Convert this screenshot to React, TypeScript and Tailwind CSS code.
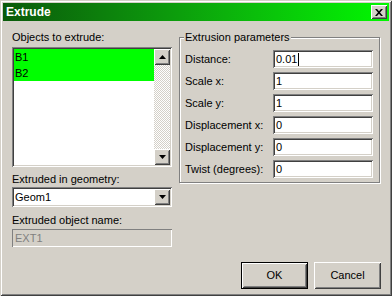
import React from "react";

const sunken =
  "shadow-[inset_1px_1px_#808080,inset_-1px_-1px_#ffffff,inset_2px_2px_#404040,inset_-2px_-2px_#d4d0c8]";
const raised =
  "shadow-[inset_1px_1px_#ffffff,inset_-1px_-1px_#404040,inset_2px_2px_#d4d0c8,inset_-2px_-2px_#808080]";

const Arrow: React.FC<{ up?: boolean }> = ({ up }) => (
  <svg width="7" height="4" viewBox="0 0 7 4">
    {up ? <polygon points="3.5,0 7,4 0,4" fill="#000" /> : <polygon points="0,0 7,0 3.5,4" fill="#000" />}
  </svg>
);

const ScrollButton: React.FC<{ up?: boolean }> = ({ up }) => (
  <div className={`w-[16px] h-[16px] bg-[#d4d0c8] flex items-center justify-center ${raised}`}>
    <Arrow up={up} />
  </div>
);

const params: { label: string; value: string; caret?: boolean }[] = [
  { label: "Distance:", value: "0.01", caret: true },
  { label: "Scale x:", value: "1" },
  { label: "Scale y:", value: "1" },
  { label: "Displacement x:", value: "0" },
  { label: "Displacement y:", value: "0" },
  { label: "Twist (degrees):", value: "0" },
];

export default function App() {
  return (
    <div
      className="w-[392px] h-[296px] bg-[#d4d0c8] p-[3px] flex flex-col text-[11px] leading-[13px] text-black shadow-[inset_1px_1px_#d4d0c8,inset_-1px_-1px_#404040,inset_2px_2px_#ffffff,inset_-2px_-2px_#808080]"
      style={{ fontFamily: '"Liberation Sans", Arial, sans-serif' }}
    >
      {/* title bar */}
      <div className="h-[18px] flex items-center justify-between pl-[3px] pr-[2px] bg-linear-to-r from-[#0a5a0a] to-[#00f800]">
        <span className="text-white font-bold text-[12px] leading-[14px]">Extrude</span>
        <div className={`w-[16px] h-[14px] bg-[#d4d0c8] flex items-center justify-center ${raised}`}>
          <svg width="8" height="7" viewBox="0 0 8 7">
            <path d="M0 0h2l2 2.2L6 0h2L5 3.5 8 7H6L4 4.8 2 7H0l3-3.5z" fill="#000" />
          </svg>
        </div>
      </div>

      {/* body */}
      <div className="flex-1 flex flex-col pt-[10px] pl-[9px] pr-[8px] pb-[4px]">
        <div className="flex gap-[7px]">
          {/* left column */}
          <div className="w-[160px] flex flex-col">
            <div>Objects to extrude:</div>
            <div className={`mt-[3px] h-[120px] bg-white p-[2px] flex ${sunken}`}>
              <div className="flex-1 flex flex-col">
                <div className="h-[16px] pl-[1px] flex items-center bg-[#00ff00]">B1</div>
                <div className="h-[16px] pl-[1px] flex items-center bg-[#00ff00]">B2</div>
              </div>
              <div className="w-[16px] flex flex-col">
                <ScrollButton up />
                <div className="flex-1 bg-[repeating-conic-gradient(#d4d0c8_0_25%,#ffffff_0_50%)] bg-[length:2px_2px]" />
                <ScrollButton />
              </div>
            </div>
            <div className="mt-[6px]">Extruded in geometry:</div>
            <div className={`mt-[1px] h-[20px] bg-white p-[2px] flex ${sunken}`}>
              <div className="flex-1 pl-[1px] flex items-center">Geom1</div>
              <ScrollButton />
            </div>
            <div className="mt-[7px]">Extruded object name:</div>
            <div className="mt-[2px] h-[18px] pl-[3px] flex items-center text-[#808080] shadow-[inset_1px_1px_#808080,inset_-1px_-1px_#ffffff]">
              EXT1
            </div>
          </div>

          {/* right group */}
          <fieldset className="w-[201px] h-[152px] border border-[#808080] pl-[5px] pr-[6px] pt-[6px] pb-[4px] shadow-[inset_1px_1px_#ffffff,1px_1px_#ffffff]">
            <legend className="px-[1px] -ml-[1px] bg-[#d4d0c8]">Extrusion parameters</legend>
            <div className="flex flex-col gap-[4px]">
              {params.map((p) => (
                <div key={p.label} className="flex items-center h-[18px]">
                  <div className="w-[88px]">{p.label}</div>
                  <div className={`w-[100px] h-[18px] bg-white pl-[3px] flex items-center ${sunken}`}>
                    {p.value}
                    {p.caret && <span className="ml-[1px] w-px h-[13px] bg-black" />}
                  </div>
                </div>
              ))}
            </div>
          </fieldset>
        </div>

        {/* buttons */}
        <div className="mt-auto flex justify-end gap-[6px]">
          <div className="w-[67px] h-[27px] border border-black flex items-center justify-center">
            <div className={`w-full h-full flex items-center justify-center ${raised}`}>OK</div>
          </div>
          <div className={`w-[67px] h-[27px] flex items-center justify-center ${raised}`}>Cancel</div>
        </div>
      </div>
    </div>
  );
}
